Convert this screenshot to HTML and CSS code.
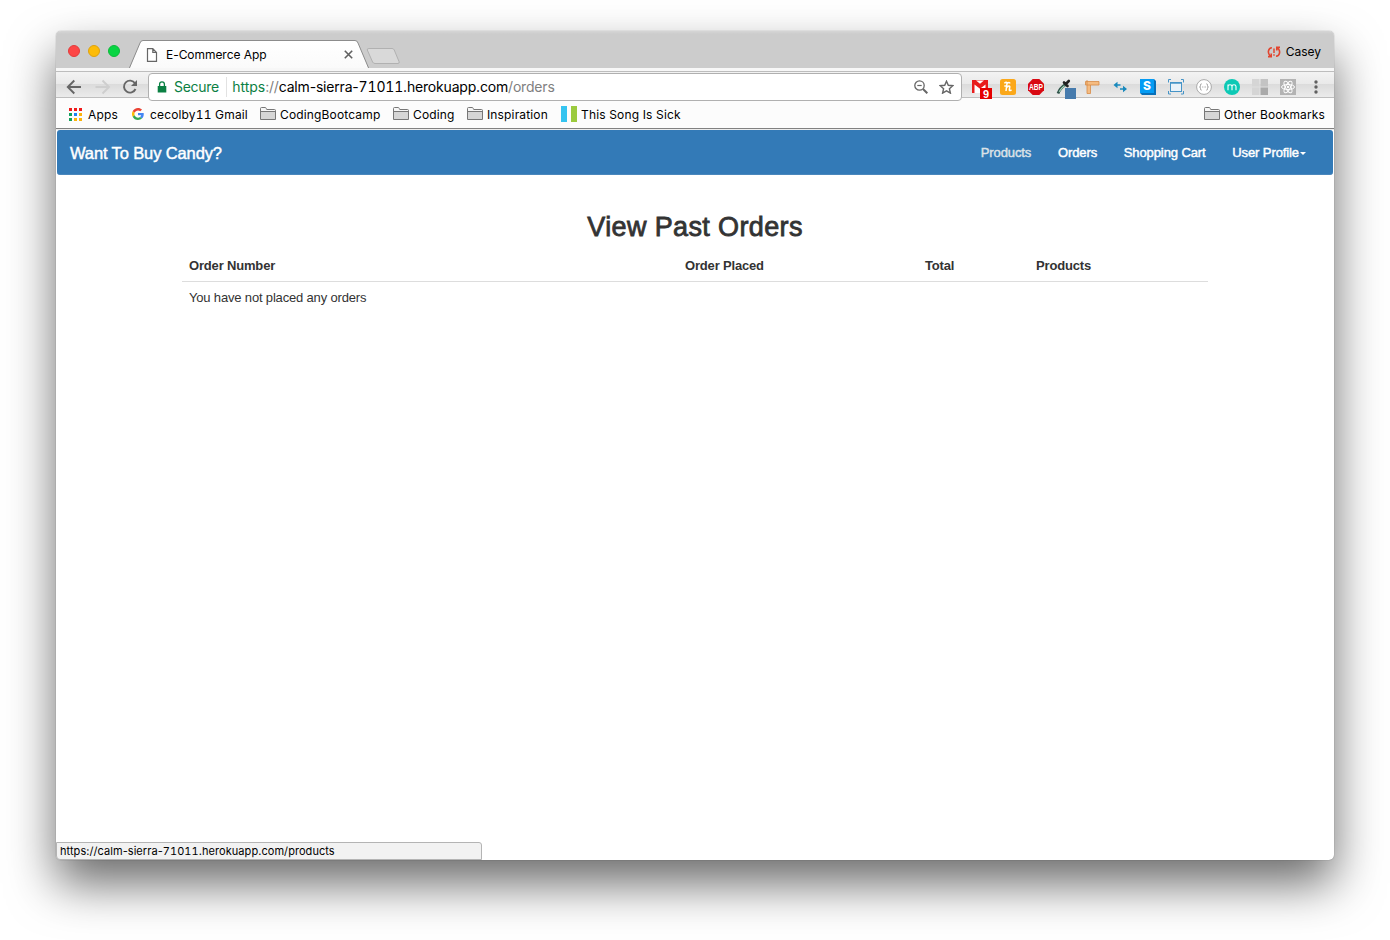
FILE: index.html
```html
<!DOCTYPE html>
<html lang="en">
<head>
<meta charset="utf-8">
<title>E-Commerce App</title>
<link rel="stylesheet" href="styles.css">
</head>
<body>
<svg class="defs" width="0" height="0">
  <defs>
    <linearGradient id="tabfill" x1="0" y1="0" x2="0" y2="1"><stop offset="0" stop-color="#fff"/><stop offset="1" stop-color="#fafafa"/></linearGradient>
    <symbol id="folder" viewBox="0 0 16 14"><path d="M.5 12.500V1.500q0-1 1-1h3.700q.8 0 1.100 1l.4 1h7.800q1 0 1 1v9z" fill="#f6f6f6" stroke="#777"/><path d="M1 5h14v7H1z" fill="#d6d6d6"/><path d="M1 4.500h14" stroke="#777"/></symbol>
  </defs>
</svg>
<div class="window">
  <div class="tabstrip">
    <div class="lights"><i class="light red"></i><i class="light yellow"></i><i class="light green"></i></div>
    <div class="tab">
      <svg class="tab-shape" width="244" height="30" viewBox="0 0 244 30"><path d="M1 29.500 12 3q.8-2.500 3-2.500h212q2.200 0 3 2.500L241 29.500z" fill="url(#tabfill)"/><path d="M1 29 12 3q.8-2.500 3-2.500h212q2.200 0 3 2.500L241 29" fill="none" stroke="#8c8c8c"/></svg>
      <div class="tab-content">
        <svg width="12" height="14" viewBox="0 0 12 14"><path d="M1.500.7h5.300l3.700 3.700v8.900h-9zM6.800.7v3.700h3.700" fill="#fff" stroke="#666" stroke-width="1.200"/></svg>
        <span class="tab-title">E-Commerce App</span>
        <svg class="close" width="9" height="9" viewBox="0 0 9 9"><path d="M.8.8l7.400 7.400M8.200.8.8 8.200" stroke="#606060" stroke-width="1.600"/></svg>
      </div>
    </div>
    <svg class="newtab" width="34" height="17" viewBox="0 0 34 17"><path d="M3 .5h23q1.500 0 2.200 1.400L33 13.500q.8 2-1 2H9q-1.700 0-2.400-1.500L1.300 2Q.8.500 3 .5z" fill="#d9d9d9" stroke="#b1b1b1"/></svg>
    <div class="profile">
      <svg width="14" height="12" viewBox="0 0 14 12" fill="none" stroke="#e2452f" stroke-width="1.600"><path d="M5 1.700C1 2 .2 7 3.300 10M1 10.600h3.200V7.500M9 10.300c4-.3 4.800-5.300 1.700-8.300M13 1.400H9.800v3.100"/><path d="M7 2.500v4.500M7 8.300v1.500" stroke-width="1.500"/></svg>
      <span class="profile-name">Casey</span>
    </div>
  </div>

  <div class="toolbar">
    <svg class="nav-buttons" width="92" height="26" viewBox="0 0 92 26" fill="none" stroke-width="1.900">
      <path d="M25 13H12M18.300 6.500 11.800 13l6.500 6.500" stroke="#666"/>
      <path d="M39.500 13H52.500M46.500 6.500 53 13l-6.500 6.500" stroke="#cecece"/>
      <path d="M79 9.300A6 6 0 1 0 79.500 15" stroke="#666"/><path d="M81 6v6h-6z" fill="#666"/>
    </svg>
    <div class="omnibox">
      <svg width="10" height="12" viewBox="0 0 10 12"><path d="M.7 5h8.600v6.500H.7z" fill="#0b8043"/><path d="M2.600 5.500V3.200a2.400 2.400 0 0 1 4.800 0v2.300" fill="none" stroke="#0b8043" stroke-width="1.300"/></svg>
      <span class="secure">Secure</span>
      <span class="url"><span class="scheme">https</span><span class="dim">://</span>calm-sierra-<span class="num">71011</span>.herokuapp.com<span class="dim">/orders</span></span>
      <span class="omni-icons">
        <svg width="14" height="14" viewBox="0 0 14 14" fill="none" stroke="#666"><circle cx="5.500" cy="5.500" r="4.700" stroke-width="1.300"/><path d="m9 9 4.300 4.300" stroke-width="2"/><path d="M3.300 5.500h4.400" stroke-width="1.200"/></svg>
        <svg width="15" height="14" viewBox="0 0 15 14"><path d="m7.500 1.200 1.800 4.100 4.500.4-3.400 3 1 4.400-3.900-2.300-3.900 2.300 1-4.400-3.400-3 4.500-.4z" fill="none" stroke="#666" stroke-width="1.400"/></svg>
      </span>
    </div>
    <div class="extensions">
      <svg viewBox="0 0 28 24"><path d="M5 5h16v13H5z" fill="#e81d1d"/><path d="M7.500 18V9.500L13 13.800l5.500-4.300V18z" fill="#fff"/><path d="M9 5.500h8L13 8.800z" fill="#fff"/><path d="M13 13h12v11H13z" fill="#e50000"/><text x="16" y="22.500" class="badge">9</text></svg>
      <svg viewBox="0 0 28 24"><rect x="5" y="4" width="16" height="16" rx="2.500" fill="#fba81a"/><path d="M9.300 8.300q2.700-2.300 2.700 0L11 16M9.300 11h2M11.500 12.500q2.900-2.700 3.300-.8L14.300 15q.7 1.200 2.200-.3M12 8.500q2.500-2 3 0" fill="none" stroke="#fff" stroke-width="1.500"/></svg>
      <svg viewBox="0 0 28 24"><path d="M9.700 4h6.600L21 8.700v6.600L16.300 20H9.700L5 15.300V8.700z" fill="#d90912"/><text x="6" y="15.100" class="abp" textLength="14" lengthAdjust="spacingAndGlyphs">ABP</text></svg>
      <svg viewBox="0 0 28 24"><path d="M7 18.500Q9 13 14.500 9.500" fill="none" stroke="#31564c" stroke-width="2.800"/><path d="M8.200 16.800Q10 13.500 13.500 10.800" fill="none" stroke="#a9d9be" stroke-width="1.100"/><path d="m13 7.500 3.500 3.500M15.300 8.500l2.500-2.500" stroke="#222" stroke-width="2.600" stroke-linecap="round"/><path d="M14 13h11v11H14z" fill="#477bad"/></svg>
      <svg viewBox="0 0 28 24"><path d="M6.500 6.500H20V10h-8.500v8.500H8V10H6.500z" fill="#f5bc82" stroke="#d78b48" stroke-width=".8"/><path d="M8 5v5h3.500" fill="none" stroke="#d78b48" stroke-width=".8"/></svg>
      <svg viewBox="0 0 28 24"><path d="M9 10h4.500M13 14h5" stroke="#1889bd" stroke-width="1.700"/><path d="m6.500 10 4-3.300v6.600zM20 14l-4-3.300v6.600z" fill="#1889bd"/></svg>
      <svg viewBox="0 0 28 24"><path d="m5 4h14l2 2v14H7l-2-2z" fill="#0870b9"/><path d="M5 4h14v14H5z" fill="#049cf4"/><text x="8" y="15" class="s-icon">S</text></svg>
      <svg viewBox="0 0 28 24" fill="none" stroke="#4694c7"><rect x="7.500" y="7.500" width="11" height="9" fill="#e9f2f9"/><path d="M7.500 8h11" stroke-width="1.500"/><path d="M5.500 7.500v-3H8M18 4.500h2.500v3M20.500 16v3H18M8 19H5.500v-3"/></svg>
      <svg viewBox="0 0 28 24"><circle cx="13" cy="12" r="7.400" fill="#fff" stroke="#aaa"/><path d="M10.700 8.800q-1.400 0-1.200 1.500.2 1.700-1 1.700 1.200 0 1 1.700-.2 1.500 1.200 1.500M15.300 8.800q1.400 0 1.200 1.500-.2 1.700 1 1.700-1.200 0-1 1.700.2 1.500-1.200 1.500M11.200 12h.8m.7 0h.8m.7 0h.8" fill="none" stroke="#999" stroke-width=".9"/></svg>
      <svg viewBox="0 0 28 24"><circle cx="13" cy="12" r="8" fill="#0cc9b5"/><path d="M9 15.300V9.500M9 11.500q0-1.800 2-1.800t2 1.800v3.800m0-3.800q0-1.800 2-1.800t2 1.800v3.800" fill="none" stroke="#fff" stroke-width="1.100"/></svg>
      <svg viewBox="0 0 28 24"><path d="M5 4h7.500v7.500H5zM5 12.500h7.500V20H5z" fill="#d5d5d5"/><path d="M13.500 4H21v7.500h-7.500z" fill="#c3c3c3"/><path d="M13.500 12.500H21V20h-7.500z" fill="#aaa"/></svg>
      <svg viewBox="0 0 28 24"><path d="M5 4h16v16H5z" fill="#b3b3b3"/><g fill="none" stroke="#fff"><ellipse cx="13" cy="12" rx="6.500" ry="2.500"/><ellipse cx="13" cy="12" rx="6.500" ry="2.500" transform="rotate(60 13 12)"/><ellipse cx="13" cy="12" rx="6.500" ry="2.500" transform="rotate(120 13 12)"/></g><circle cx="13" cy="12" r="1.200" fill="#fff"/></svg>
      <svg viewBox="0 0 28 24" fill="#606060"><circle cx="13" cy="7" r="1.700"/><circle cx="13" cy="12" r="1.700"/><circle cx="13" cy="17" r="1.700"/></svg>
    </div>
  </div>

  <div class="bookmarks">
    <div class="bm apps"><svg width="13" height="13" viewBox="0 0 13 13"><path d="M0 0h3v3H0zM5 0h3v3H5zM10 0h3v3h-3z" fill="#ef1b1b"/><path d="M0 5h3v3H0zM0 10h3v3H0z" fill="#12a05c"/><path d="M5 5h3v3H5z" fill="#1a82f3"/><path d="M10 5h3v3h-3zM5 10h3v3H5zM10 10h3v3h-3z" fill="#fbb30b"/></svg><span>Apps</span></div>
    <div class="bm gmail"><svg width="12" height="12" viewBox="0 0 48 48"><path d="M24 9.500c3.500 0 6.700 1.200 9.200 3.600l6.900-6.900C35.900 2.400 30.500 0 24 0 14.600 0 6.500 5.400 2.600 13.200l8 6.200C12.400 13.700 17.700 9.500 24 9.500z" fill="#ea4335"/><path d="M47 24.500c0-1.600-.2-3.100-.4-4.500H24v9h12.900c-.6 3-2.300 5.500-4.800 7.200l7.700 6C44.400 38 47 31.800 47 24.500z" fill="#4285f4"/><path d="M10.500 28.600a14 14 0 0 1 0-9.200l-8-6.200a24 24 0 0 0 0 21.600z" fill="#fbbc05"/><path d="M24 48c6.500 0 11.900-2.100 15.900-5.800l-7.700-6c-8 5.300-18.500 1.700-21.600-7.600l-8 6.200C6.500 42.600 14.600 48 24 48z" fill="#34a853"/></svg><span>cecolby<span class="num">11</span> Gmail</span></div>
    <div class="bm bootcamp"><svg width="16" height="14"><use href="#folder"/></svg><span>CodingBootcamp</span></div>
    <div class="bm coding"><svg width="16" height="14"><use href="#folder"/></svg><span>Coding</span></div>
    <div class="bm inspiration"><svg width="16" height="14"><use href="#folder"/></svg><span>Inspiration</span></div>
    <div class="bm song"><svg width="16" height="16" viewBox="0 0 16 16"><path d="M0 0h6v16H0z" fill="#35c4f0"/><path d="M10 0h6v16h-6z" fill="#9bca3e"/></svg><span>This Song Is Sick</span></div>
    <div class="bm other"><svg width="16" height="14"><use href="#folder"/></svg><span>Other Bookmarks</span></div>
  </div>

  <div class="page">
    <nav class="navbar">
      <span class="brand">Want To Buy Candy?</span>
      <div class="links">
        <span class="hover">Products</span><span>Orders</span><span class="cart">Shopping Cart</span><span class="user">User Profile<i class="caret"></i></span>
      </div>
    </nav>
    <main class="content">
      <h1>View Past Orders</h1>
      <div class="row head"><span>Order Number</span><span>Order Placed</span><span>Total</span><span>Products</span></div>
      <div class="row empty"><span>You have not placed any orders</span></div>
    </main>
    <div class="status">https://calm-sierra-<span class="num">71011</span>.herokuapp.com/products</div>
  </div>
</div>
</body>
</html>
```
FILE: styles.css
```css
* { box-sizing: border-box; }
body { margin: 0; height: 940px; padding: 31px 56px 0; background: #fff; overflow: hidden; font-family: Inter, "Liberation Sans", sans-serif; color: #000; }
svg { display: block; flex: none; }
.defs { position: absolute; }
.num { font-variant-numeric: tabular-nums; }
.window { display: flex; flex-direction: column; width: 1278px; height: 829px; border-radius: 5px; background: #fff; box-shadow: 0 0 1px rgba(0,0,0,.55), 0 24px 48px rgba(0,0,0,.58); }

.tabstrip { display: flex; height: 37px; background: linear-gradient(#d6d6d6, #ccc 3px); border-radius: 5px 5px 0 0; }
.lights { display: flex; gap: 8px; padding: 14px 0 0 12px; width: 72px; }
.light { width: 12px; height: 12px; border-radius: 50%; border: 1px solid; }
.red { background: #fd4646; border-color: #e33b3b; }
.yellow { background: #fdbc08; border-color: #dfa20d; }
.green { background: #08d543; border-color: #0dba3b; }
.tab { display: grid; width: 244px; height: 30px; margin-top: 9px; }
.tab-shape, .tab-content { grid-area: 1 / 1; }
.tab-content { display: flex; align-items: center; padding: 0 19px 0 18px; height: 29px; }
.tab-title { margin-left: 8px; font-size: 12px; letter-spacing: -.05px; }
.close { margin-left: auto; }
.newtab { margin: 17px 0 0 -6px; }
.profile { display: flex; align-items: center; gap: 5px; margin-left: auto; padding: 4px 13px 0 0; font-size: 12px; }

.toolbar { display: flex; height: 30px; padding-top: 5px; background: linear-gradient(#f7f7f7 0 3px, #bdbdbd 3px 4px, #f3f3f3 4px, #e9e9e9 16px, #dbdbdb 16px, #ebebeb 29px, #bebebe 29px); }
.nav-buttons { margin-top: 1px; }
.omnibox { display: flex; align-items: center; position: relative; width: 814px; height: 28px; padding: 0 7px 0 8px; border: 1px solid #b0b0b0; border-radius: 4px; background: #fff; font-size: 14px; }
.secure { margin-left: 7px; padding-right: 7px; height: 20px; line-height: 19px; border-right: 1px solid #e2e2e2; color: #0b8043; letter-spacing: -.3px; }
.url { margin-left: 5.500px; padding-bottom: 2px; letter-spacing: -.185px; }
.scheme { color: #0b8043; letter-spacing: -.05px; }
.dim { color: #808080; }
.omni-icons { display: flex; gap: 11.500px; margin-left: auto; }
.extensions { display: grid; grid-template-columns: repeat(13, 28px); margin-left: 5px; margin-top: 2px; position: relative; }
.extensions svg { width: 28px; height: 24px; }
.badge { font: bold 11px "Liberation Sans", sans-serif; fill: #fff; }
.abp { font: bold 9px "Liberation Sans", sans-serif; fill: #fff; }
.s-icon { font: 800 12px Inter, sans-serif; fill: #fff; }

.bookmarks { display: grid; grid-template-columns: 63px 128px 133px 74px 94px 643px 1fr; height: 32px; padding: 2px 0 1px 13px; background: #fcfcfc; border-bottom: 1px solid #ededed; box-shadow: inset 0 -1px #818181; font-size: 12px; letter-spacing: .15px; }
.bm { display: flex; align-items: center; gap: 4px; white-space: nowrap; }
.apps, .gmail { gap: 6px; }

.page { display: flex; flex-direction: column; flex: 1; font-family: "Liberation Sans", Arial, sans-serif; color: #333; }
.navbar { display: flex; justify-content: space-between; align-items: center; height: 45px; margin: 0 1px; padding: 1px 27px 0 13px; background: #337ab7; border-radius: 3px; border-bottom: 1px solid #4a87bc; color: #fff; }
.brand { padding-top: 1px; font-size: 16.500px; letter-spacing: -.12px; -webkit-text-stroke: .45px; }
.links { display: flex; gap: 26.700px; font-size: 13px; letter-spacing: -.1px; -webkit-text-stroke: .45px; }
.hover { color: #dce2e7; }
.caret { display: inline-block; border: 3.500px solid transparent; border-top-color: #fff; border-bottom: 0; margin-left: 1px; vertical-align: 2px; }
.content { width: 1026px; margin: 35px auto 0; }
h1 { margin: 0; font-size: 27px; line-height: 34px; font-weight: 400; text-align: center; letter-spacing: .37px; -webkit-text-stroke: .8px; }
.row { display: grid; grid-template-columns: 496px 240px 111px 1fr; padding-left: 7px; font-size: 13px; line-height: 18px; letter-spacing: -.17px; }
.head { height: 38px; padding-top: 13px; font-weight: 700; border-bottom: 1px solid #ddd; }
.empty { padding-top: 7px; }
.status { width: 426px; height: 18px; margin-top: auto; padding-left: 3px; border: 1px solid #b4b4b4; border-radius: 0 3px 0 4px; background: #f2f2f2; color: #000; font: 11px/16px Inter, sans-serif; letter-spacing: .06px; }
```
